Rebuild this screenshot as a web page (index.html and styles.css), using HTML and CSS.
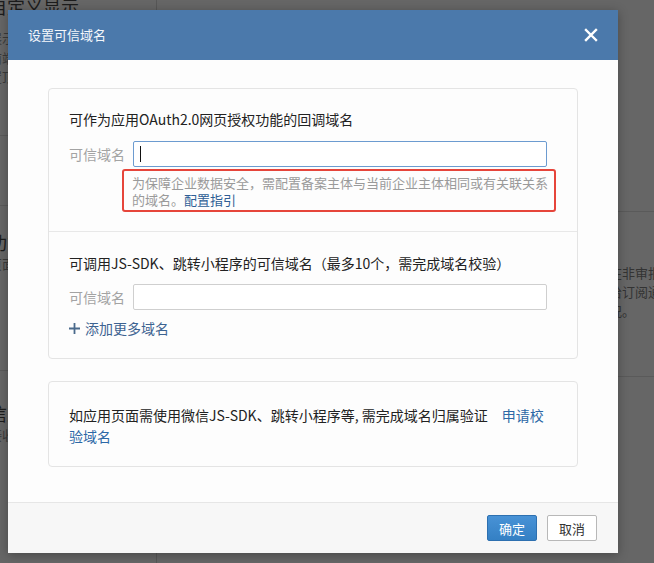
FILE: index.html
```html
<!DOCTYPE html>
<html lang="zh-CN">
<head>
<meta charset="utf-8">
<title>设置可信域名</title>
<link rel="stylesheet" href="styles.css">
</head>
<body>
<div class="page">
  <div class="bg-left">
    <div class="bg-block b1">
      <div class="bg-big">自定义显示</div>
      <div class="bg-small">展示</div>
      <div class="bg-small">前端</div>
      <div class="bg-small">置顶</div>
    </div>
    <div class="bg-block b2"></div>
    <div class="bg-block b3">
      <div class="bg-big">功能</div>
      <div class="bg-small">页面</div>
    </div>
    <div class="bg-block b4">
      <div class="bg-big">信息</div>
      <div class="bg-small">接收</div>
    </div>
  </div>
  <div class="bg-right">
    <div class="bg-block r1"></div>
    <div class="bg-block r2">
      <div class="bg-para">在非审批<br>给订阅通<br>况。</div>
    </div>
  </div>
</div>

<div class="dialog">
  <div class="dlg-head">
    <span class="dlg-title">设置可信域名</span>
    <svg class="close" width="14" height="14" viewBox="0 0 14 14"><path d="M2 2 L12 12 M12 2 L2 12" stroke="#fff" stroke-width="2.4" stroke-linecap="square"/></svg>
  </div>
  <div class="dlg-body">
    <div class="box">
      <div class="section s1">
        <div class="sec-title">可作为应用OAuth2.0网页授权功能的回调域名</div>
        <div class="row">
          <span class="label">可信域名</span>
          <div class="input focus"><span class="caret"></span></div>
        </div>
        <div class="hint">为保障企业数据安全，需配置备案主体与当前企业主体相同或有关联关系的域名。<span class="hint-link">配置指引</span></div>
      </div>
      <div class="section s2">
        <div class="sec-title">可调用JS-SDK、跳转小程序的可信域名（最多10个，需完成域名校验）</div>
        <div class="row row2">
          <span class="label">可信域名</span>
          <div class="input"></div>
        </div>
        <div class="add">
          <svg width="11" height="11" viewBox="0 0 11 11"><path d="M5.5 0 V11 M0 5.5 H11" stroke="#4a6a8c" stroke-width="1.8"/></svg>
          <span>添加更多域名</span>
        </div>
      </div>
    </div>
    <div class="box box2">
      <p class="note">如应用页面需使用微信JS-SDK、跳转小程序等, 需完成域名归属验证<span class="note-link">申请校验域名</span></p>
    </div>
  </div>
  <div class="dlg-foot">
    <div class="btn primary">确定</div>
    <div class="btn default">取消</div>
  </div>
</div>
</body>
</html>
```

FILE: styles.css
```css
* { box-sizing: border-box; }

body {
  margin: 0;
  width: 654px;
  height: 563px;
  overflow: hidden;
  position: relative;
  background: #666666;
  font-family: "Noto Sans CJK SC", "Microsoft YaHei", sans-serif;
}

/* underlying page (dimmed) */
.page {
  display: flex;
  height: 563px;
}
.bg-left {
  width: 168px;
  margin-left: -11px;
  border-right: 1px solid #575757;
  flex: none;
}
.bg-right {
  flex: 1;
}
.bg-block {
  border-bottom: 1px solid #5a5a5a;
}
.b1 { height: 142px; }
.b2 { height: 70px; }
.b3 { height: 165px; padding-top: 24px; }
.b4 { border-bottom: none; padding-top: 30px; }
.r1 { height: 212px; }
.r2 { height: 165px; padding-top: 51px; padding-left: 452px; }

.bg-big {
  font-size: 18px;
  line-height: 24px;
  color: #1c1c1c;
}
.b1 .bg-big { margin-top: -6px; margin-bottom: 10px; }
.bg-small {
  font-size: 13px;
  line-height: 19.5px;
  color: #3a3a3a;
}
.bg-para {
  font-size: 13px;
  line-height: 19px;
  color: #333;
  white-space: nowrap;
}

/* dialog */
.dialog {
  position: absolute;
  left: 8px;
  top: 10px;
  width: 610px;
  height: 543px;
  background: #fdfdfd;
  display: flex;
  flex-direction: column;
  box-shadow: 0 2px 10px rgba(0, 0, 0, 0.3);
}
.dlg-head {
  height: 50px;
  flex: none;
  background: #4b79ab;
  display: flex;
  align-items: center;
  justify-content: space-between;
  padding: 0 20px;
}
.dlg-title {
  color: #f4f7fb;
  font-size: 13px;
  line-height: 20px;
}
.close { display: block; }

.dlg-body {
  flex: 1;
  padding: 28px 40px 0 40px;
}
.box {
  border: 1px solid #e4e4e4;
  border-radius: 4px;
  background: #fdfdfd;
}
.section { padding: 20px 20px 19px 20px; }
.s1 { border-bottom: 1px solid #e8e8e8; }
.s2 { padding-top: 21px; padding-bottom: 20px; }

.sec-title {
  font-size: 14px;
  line-height: 20px;
  color: #222;
  white-space: nowrap;
}
.row {
  display: flex;
  align-items: center;
  margin-top: 12px;
}
.row2 { margin-top: 11px; }
.label {
  width: 64px;
  flex: none;
  font-size: 14px;
  color: #a3a3a3;
  line-height: 20px;
}
.input {
  width: 414px;
  height: 26px;
  border: 1px solid #cfcfcf;
  border-radius: 2px;
  background: #fff;
  display: flex;
  align-items: center;
}
.input.focus { border-color: #6c9bd0; }
.caret {
  width: 1px;
  height: 16px;
  margin-left: 6px;
  background: #111;
}
.hint {
  margin-top: 2px;
  margin-left: 53px;
  width: 434px;
  border: 2px solid #e6453b;
  border-radius: 3px;
  padding: 3px 4px 2px 8px;
  font-size: 13px;
  line-height: 17px;
  color: #9a9a9a;
}
.hint-link { color: #2e5e95; }

.add {
  display: flex;
  align-items: center;
  gap: 5px;
  margin-top: 8px;
  font-size: 14px;
  line-height: 20px;
  color: #3d6391;
}
.add svg { display: block; }

.box2 {
  margin-top: 22px;
  padding: 23px 20px 19px 20px;
}
.note {
  margin: 0;
  font-size: 14px;
  line-height: 21px;
  color: #222;
}
.note-link {
  margin-left: 14px;
  color: #2c68a6;
}

.dlg-foot {
  height: 51px;
  flex: none;
  border-top: 1px solid #e6e6e6;
  background: #f7f7f7;
  display: flex;
  align-items: center;
  justify-content: flex-end;
  gap: 10px;
  padding-right: 21px;
}
.btn {
  width: 50px;
  height: 26px;
  border-radius: 2px;
  display: flex;
  align-items: center;
  justify-content: center;
  font-size: 13px;
}
.primary {
  background: linear-gradient(#4892d6, #3480c4);
  border: 1px solid #2d70b0;
  color: #fff;
}
.default {
  background: #fff;
  border: 1px solid #b8b8b8;
  color: #333;
}
```
